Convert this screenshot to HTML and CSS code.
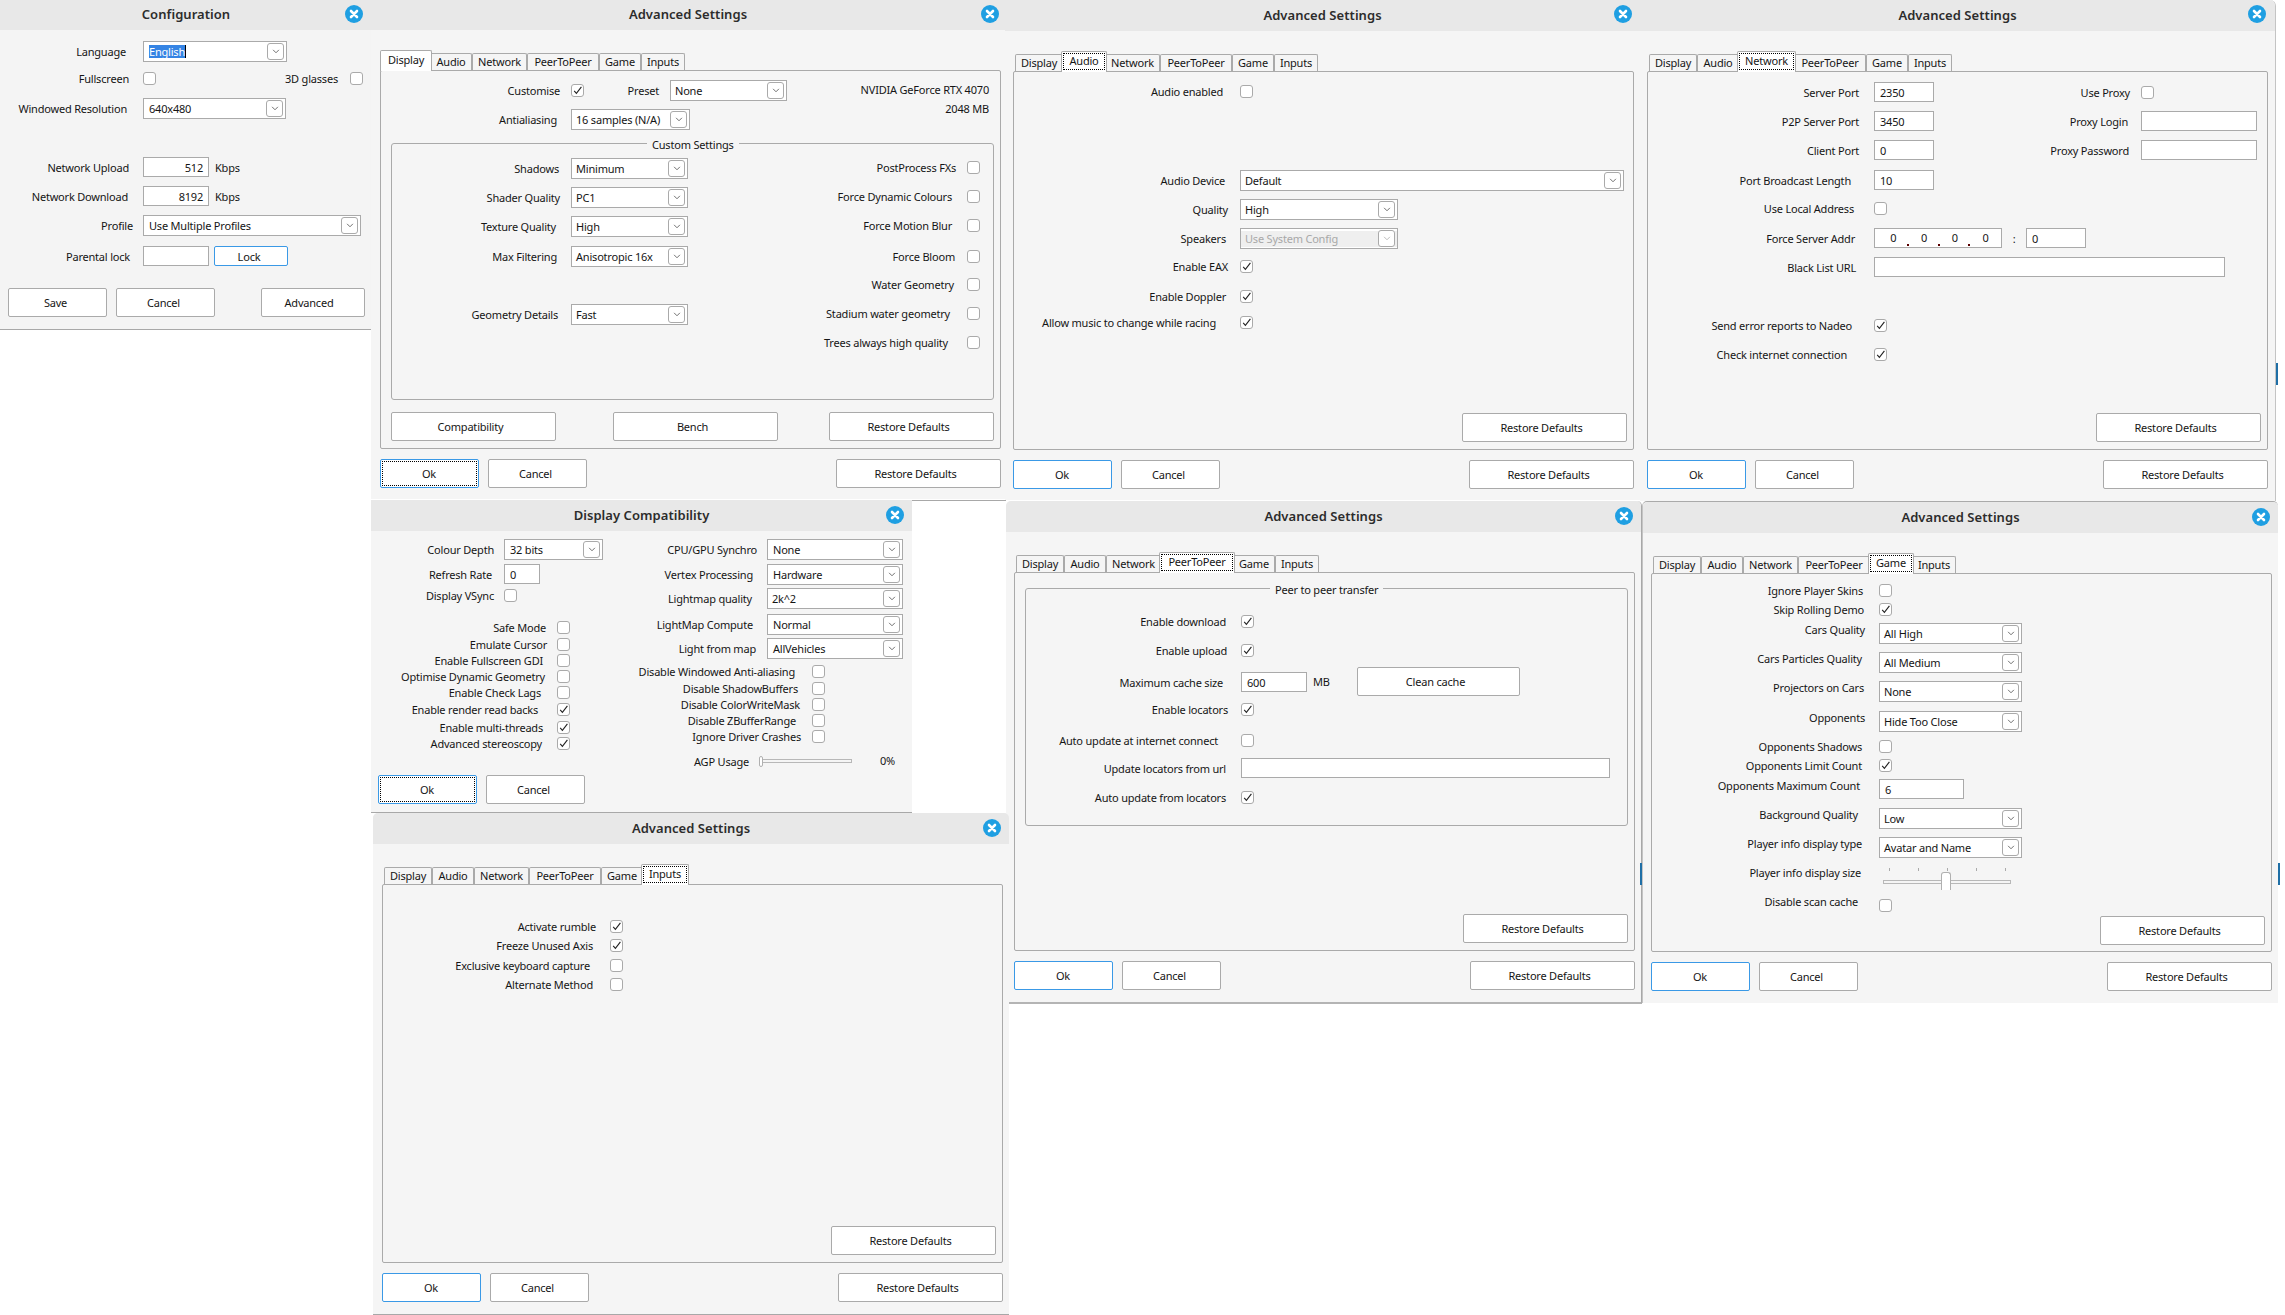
FILE: index.html
```html
<!DOCTYPE html>
<html lang="en">
<head>
<meta charset="utf-8">
<title>Game configuration dialogs</title>
<link rel="stylesheet" href="styles.css">
</head>
<body>
<svg class="defs" width="0" height="0" aria-hidden="true">
  <symbol id="chev" viewBox="0 0 9 6"><path d="M1 1 L4.5 4.5 L8 1" fill="none" stroke="currentColor" stroke-width="1"/></symbol>
  <symbol id="tick" viewBox="0 0 11 11"><path d="M2.2 5.8 L4.4 8.4 L9.4 1.8" fill="none" stroke="#222" stroke-width="1.1"/></symbol>
  <symbol id="close" viewBox="0 0 18 18"><circle cx="9" cy="9" r="9" fill="#1f9fe2"/><path d="M6 6 L12 12 M12 6 L6 12" stroke="#fff" stroke-width="2.6" stroke-linecap="round"/></symbol>
</svg>
<main class="desktop">

<section class="win w-config">
  <header class="title"><h2>Configuration</h2><svg class="x"><use href="#close"/></svg></header>
  <div class="form f-config">
    <div class="row"><span class="lb p17">Language</span><div class="combo w144 pl5"><span><span class="sel">English</span></span><i class="drop"><svg><use href="#chev"/></svg></i></div></div>
    <div class="row"><span class="lb p14">Fullscreen</span><i class="cb"></i><span class="lb glasses">3D glasses</span><i class="cb"></i></div>
    <div class="row"><span class="lb p16">Windowed Resolution</span><div class="combo w143 pl5"><span>640x480</span><i class="drop"><svg><use href="#chev"/></svg></i></div></div>
    <div class="row"><span class="lb p14">Network Upload</span><div class="field w66 end">512</div><span class="unit">Kbps</span></div>
    <div class="row"><span class="lb p15">Network Download</span><div class="field w66 end">8192</div><span class="unit">Kbps</span></div>
    <div class="row"><span class="lb p10">Profile</span><div class="combo w218 pl5"><span>Use Multiple Profiles</span><i class="drop"><svg><use href="#chev"/></svg></i></div></div>
    <div class="row"><span class="lb p13">Parental lock</span><div class="field w66"></div><button class="btn lock">Lock</button></div>
  </div>
  <footer class="actions config-actions">
    <button class="btn">Save</button><button class="btn ml9">Cancel</button><button class="btn wide push">Advanced</button>
  </footer>
</section>

<section class="win adv w-display short">
  <header class="title"><h2>Advanced Settings</h2><svg class="x"><use href="#close"/></svg></header>
  <div class="adv-body">
    <nav class="tabs"><span class="tab t-display on">Display</span><span class="tab t-audio">Audio</span><span class="tab t-network">Network</span><span class="tab t-peer">PeerToPeer</span><span class="tab t-game">Game</span><span class="tab t-inputs">Inputs</span></nav>
    <div class="pane">
      <div class="overlay">
        <div class="form f-disp-top">
          <div class="row"><span class="lb p11">Customise</span><i class="cb on"><svg><use href="#tick"/></svg></i><span class="lb preset p11">Preset</span><div class="combo w117"><span>None</span><i class="drop"><svg><use href="#chev"/></svg></i></div></div>
          <div class="row"><span class="lb p14">Antialiasing</span><div class="combo w119"><span>16 samples (N/A)</span><i class="drop"><svg><use href="#chev"/></svg></i></div></div>
        </div>
        <div class="gpu"><p>NVIDIA GeForce RTX 4070</p><p>2048 MB</p></div>
      </div>
      <div class="group g-custom">
        <span class="legend lg-custom">Custom Settings</span>
        <div class="form f-disp-left">
          <div class="row"><span class="lb p12">Shadows</span><div class="combo w117"><span>Minimum</span><i class="drop"><svg><use href="#chev"/></svg></i></div></div>
          <div class="row"><span class="lb p11">Shader Quality</span><div class="combo w117"><span>PC1</span><i class="drop"><svg><use href="#chev"/></svg></i></div></div>
          <div class="row"><span class="lb p15">Texture Quality</span><div class="combo w117"><span>High</span><i class="drop"><svg><use href="#chev"/></svg></i></div></div>
          <div class="row"><span class="lb p14">Max Filtering</span><div class="combo w117"><span>Anisotropic 16x</span><i class="drop"><svg><use href="#chev"/></svg></i></div></div>
          <div class="row"><span class="lb p13">Geometry Details</span><div class="combo w117"><span>Fast</span><i class="drop"><svg><use href="#chev"/></svg></i></div></div>
        </div>
        <div class="form f-disp-right">
          <div class="row"><span class="lb p11">PostProcess FXs</span><i class="cb"></i></div>
          <div class="row"><span class="lb p15">Force Dynamic Colours</span><i class="cb"></i></div>
          <div class="row"><span class="lb p15">Force Motion Blur</span><i class="cb"></i></div>
          <div class="row"><span class="lb p12">Force Bloom</span><i class="cb"></i></div>
          <div class="row"><span class="lb p13">Water Geometry</span><i class="cb"></i></div>
          <div class="row"><span class="lb p17">Stadium water geometry</span><i class="cb"></i></div>
          <div class="row"><span class="lb p19">Trees always high quality</span><i class="cb"></i></div>
        </div>
      </div>
      <div class="pane-foot disp-foot"><button class="btn w165">Compatibility</button><button class="btn w165 ml57">Bench</button><button class="btn w165 push">Restore Defaults</button></div>
    </div>
    <footer class="actions"><button class="btn ok dotted">Ok</button><button class="btn ml9">Cancel</button><button class="btn w165 push">Restore Defaults</button></footer>
  </div>
</section>

<section class="win adv w-audio">
  <header class="title"><h2>Advanced Settings</h2><svg class="x"><use href="#close"/></svg></header>
  <div class="adv-body">
    <nav class="tabs"><span class="tab t-display">Display</span><span class="tab t-audio on dotted">Audio</span><span class="tab t-network">Network</span><span class="tab t-peer">PeerToPeer</span><span class="tab t-game">Game</span><span class="tab t-inputs">Inputs</span></nav>
    <div class="pane">
      <div class="form f-audio">
        <div class="row"><span class="lb p17">Audio enabled</span><i class="cb"></i></div>
        <div class="row"><span class="lb p15">Audio Device</span><div class="combo w384"><span>Default</span><i class="drop"><svg><use href="#chev"/></svg></i></div></div>
        <div class="row"><span class="lb p12">Quality</span><div class="combo w158"><span>High</span><i class="drop"><svg><use href="#chev"/></svg></i></div></div>
        <div class="row"><span class="lb p14">Speakers</span><div class="combo w158 off"><span>Use System Config</span><i class="drop"><svg><use href="#chev"/></svg></i></div></div>
        <div class="row"><span class="lb p12">Enable EAX</span><i class="cb on"><svg><use href="#tick"/></svg></i></div>
        <div class="row"><span class="lb p14">Enable Doppler</span><i class="cb on"><svg><use href="#tick"/></svg></i></div>
        <div class="row"><span class="lb p24">Allow music to change while racing</span><i class="cb on"><svg><use href="#tick"/></svg></i></div>
      </div>
      <div class="pane-foot"><button class="btn w165">Restore Defaults</button></div>
    </div>
    <footer class="actions"><button class="btn ok">Ok</button><button class="btn ml9">Cancel</button><button class="btn w165 push">Restore Defaults</button></footer>
  </div>
</section>

<section class="win adv w-network">
  <header class="title"><h2>Advanced Settings</h2><svg class="x"><use href="#close"/></svg></header>
  <div class="adv-body">
    <nav class="tabs"><span class="tab t-display">Display</span><span class="tab t-audio">Audio</span><span class="tab t-network on dotted">Network</span><span class="tab t-peer">PeerToPeer</span><span class="tab t-game">Game</span><span class="tab t-inputs">Inputs</span></nav>
    <div class="pane">
      <div class="overlay">
        <div class="form f-net-left">
          <div class="row"><span class="lb p15">Server Port</span><div class="field w60">2350</div></div>
          <div class="row"><span class="lb p15">P2P Server Port</span><div class="field w60">3450</div></div>
          <div class="row"><span class="lb p15">Client Port</span><div class="field w60">0</div></div>
          <div class="row"><span class="lb p23">Port Broadcast Length</span><div class="field w60">10</div></div>
          <div class="row"><span class="lb p20">Use Local Address</span><i class="cb"></i></div>
          <div class="row"><span class="lb p19">Force Server Addr</span><div class="field ip"><span class="seg">0</span><span class="seg">0</span><span class="seg">0</span><span class="seg">0</span></div><span class="colon">:</span><div class="field w60">0</div></div>
          <div class="row"><span class="lb p18">Black List URL</span><div class="field w351"></div></div>
          <div class="row"><span class="lb p22">Send error reports to Nadeo</span><i class="cb on"><svg><use href="#tick"/></svg></i></div>
          <div class="row"><span class="lb p27">Check internet connection</span><i class="cb on"><svg><use href="#tick"/></svg></i></div>
        </div>
        <div class="form f-net-right">
          <div class="row"><span class="lb p11">Use Proxy</span><i class="cb"></i></div>
          <div class="row"><span class="lb p13">Proxy Login</span><div class="field w116"></div></div>
          <div class="row"><span class="lb p12">Proxy Password</span><div class="field w116"></div></div>
        </div>
      </div>
      <div class="pane-foot"><button class="btn w165">Restore Defaults</button></div>
    </div>
    <footer class="actions"><button class="btn ok">Ok</button><button class="btn ml9">Cancel</button><button class="btn w165 push">Restore Defaults</button></footer>
  </div>
</section>

<div class="win blank"></div>

<section class="win w-compat">
  <header class="title"><h2>Display Compatibility</h2><svg class="x"><use href="#close"/></svg></header>
  <div class="overlay">
    <div class="compat-left">
      <div class="form f-comp-a">
        <div class="row"><span class="lb p10">Colour Depth</span><div class="combo w99 pl5"><span>32 bits</span><i class="drop"><svg><use href="#chev"/></svg></i></div></div>
        <div class="row"><span class="lb p12">Refresh Rate</span><div class="field w36">0</div></div>
        <div class="row"><span class="lb p10">Display VSync</span><i class="cb"></i></div>
      </div>
      <div class="form f-comp-b">
        <div class="row"><span class="lb p11">Safe Mode</span><i class="cb"></i></div>
        <div class="row"><span class="lb p10">Emulate Cursor</span><i class="cb"></i></div>
        <div class="row"><span class="lb p14">Enable Fullscreen GDI</span><i class="cb"></i></div>
        <div class="row"><span class="lb p12">Optimise Dynamic Geometry</span><i class="cb"></i></div>
        <div class="row"><span class="lb p16">Enable Check Lags</span><i class="cb"></i></div>
        <div class="row"><span class="lb p19">Enable render read backs</span><i class="cb on"><svg><use href="#tick"/></svg></i></div>
        <div class="row"><span class="lb p14">Enable multi-threads</span><i class="cb on"><svg><use href="#tick"/></svg></i></div>
        <div class="row"><span class="lb p15">Advanced stereoscopy</span><i class="cb on"><svg><use href="#tick"/></svg></i></div>
      </div>
      <footer class="actions comp-actions"><button class="btn ok dotted">Ok</button><button class="btn ml9">Cancel</button></footer>
    </div>
    <div class="compat-right">
      <div class="form f-comp-c">
        <div class="row"><span class="lb p10">CPU/GPU Synchro</span><div class="combo w136 pl5"><span>None</span><i class="drop"><svg><use href="#chev"/></svg></i></div></div>
        <div class="row"><span class="lb p14">Vertex Processing</span><div class="combo w136 pl5"><span>Hardware</span><i class="drop"><svg><use href="#chev"/></svg></i></div></div>
        <div class="row"><span class="lb p15">Lightmap quality</span><div class="combo w136"><span>2k^2</span><i class="drop"><svg><use href="#chev"/></svg></i></div></div>
        <div class="row"><span class="lb p14">LightMap Compute</span><div class="combo w136 pl5"><span>Normal</span><i class="drop"><svg><use href="#chev"/></svg></i></div></div>
        <div class="row"><span class="lb p11">Light from map</span><div class="combo w136 pl5"><span>AllVehicles</span><i class="drop"><svg><use href="#chev"/></svg></i></div></div>
      </div>
      <div class="form f-comp-d">
        <div class="row"><span class="lb p17">Disable Windowed Anti-aliasing</span><i class="cb"></i></div>
        <div class="row"><span class="lb p14">Disable ShadowBuffers</span><i class="cb"></i></div>
        <div class="row"><span class="lb p12">Disable ColorWriteMask</span><i class="cb"></i></div>
        <div class="row"><span class="lb p16">Disable ZBufferRange</span><i class="cb"></i></div>
        <div class="row"><span class="lb p11">Ignore Driver Crashes</span><i class="cb"></i></div>
      </div>
      <div class="form f-comp-e">
        <div class="row"><span class="lb p10">AGP Usage</span><div class="slider agp"><span class="track"></span><span class="thumb"></span></div><span class="pct">0%</span></div>
      </div>
    </div>
  </div>
</section>

<section class="win adv w-peer">
  <header class="title"><h2>Advanced Settings</h2><svg class="x"><use href="#close"/></svg></header>
  <div class="adv-body">
    <nav class="tabs"><span class="tab t-display">Display</span><span class="tab t-audio">Audio</span><span class="tab t-network">Network</span><span class="tab t-peer on dotted">PeerToPeer</span><span class="tab t-game">Game</span><span class="tab t-inputs">Inputs</span></nav>
    <div class="pane">
      <div class="group g-peer">
        <span class="legend lg-peer">Peer to peer transfer</span>
        <div class="form f-peer">
          <div class="row"><span class="lb p15">Enable download</span><i class="cb on"><svg><use href="#tick"/></svg></i></div>
          <div class="row"><span class="lb p14">Enable upload</span><i class="cb on"><svg><use href="#tick"/></svg></i></div>
          <div class="row"><span class="lb p18">Maximum cache size</span><div class="field w66">600</div><span class="mb">MB</span><button class="btn clean">Clean cache</button></div>
          <div class="row"><span class="lb p13">Enable locators</span><i class="cb on"><svg><use href="#tick"/></svg></i></div>
          <div class="row"><span class="lb p23">Auto update at internet connect</span><i class="cb"></i></div>
          <div class="row"><span class="lb p15">Update locators from url</span><div class="field w369"></div></div>
          <div class="row"><span class="lb p15">Auto update from locators</span><i class="cb on"><svg><use href="#tick"/></svg></i></div>
        </div>
      </div>
      <div class="pane-foot"><button class="btn w165">Restore Defaults</button></div>
    </div>
    <footer class="actions"><button class="btn ok">Ok</button><button class="btn ml9">Cancel</button><button class="btn w165 push">Restore Defaults</button></footer>
  </div>
</section>

<section class="win adv w-game">
  <header class="title"><h2>Advanced Settings</h2><svg class="x"><use href="#close"/></svg></header>
  <div class="adv-body">
    <nav class="tabs"><span class="tab t-display">Display</span><span class="tab t-audio">Audio</span><span class="tab t-network">Network</span><span class="tab t-peer">PeerToPeer</span><span class="tab t-game on dotted">Game</span><span class="tab t-inputs">Inputs</span></nav>
    <div class="pane">
      <div class="form f-game">
        <div class="row"><span class="lb p16">Ignore Player Skins</span><i class="cb"></i></div>
        <div class="row"><span class="lb p15">Skip Rolling Demo</span><i class="cb on"><svg><use href="#tick"/></svg></i></div>
        <div class="row"><span class="lb p14 up">Cars Quality</span><div class="combo w143"><span>All High</span><i class="drop"><svg><use href="#chev"/></svg></i></div></div>
        <div class="row"><span class="lb p17 up">Cars Particles Quality</span><div class="combo w143"><span>All Medium</span><i class="drop"><svg><use href="#chev"/></svg></i></div></div>
        <div class="row"><span class="lb p15 up">Projectors on Cars</span><div class="combo w143"><span>None</span><i class="drop"><svg><use href="#chev"/></svg></i></div></div>
        <div class="row"><span class="lb p14 up">Opponents</span><div class="combo w143"><span>Hide Too Close</span><i class="drop"><svg><use href="#chev"/></svg></i></div></div>
        <div class="row"><span class="lb p17">Opponents Shadows</span><i class="cb"></i></div>
        <div class="row"><span class="lb p17">Opponents Limit Count</span><i class="cb on"><svg><use href="#tick"/></svg></i></div>
        <div class="row"><span class="lb p19 up">Opponents Maximum Count</span><div class="field w85">6</div></div>
        <div class="row"><span class="lb p21 up">Background Quality</span><div class="combo w143"><span>Low</span><i class="drop"><svg><use href="#chev"/></svg></i></div></div>
        <div class="row"><span class="lb p17 up">Player info display type</span><div class="combo w143"><span>Avatar and Name</span><i class="drop"><svg><use href="#chev"/></svg></i></div></div>
        <div class="row"><span class="lb p18 up">Player info display size</span>
          <div class="slider size"><span class="tk k1"></span><span class="tk k2"></span><span class="tk k3"></span><span class="tk k4"></span><span class="tk k5"></span><span class="track"></span><span class="thumb"></span></div>
        </div>
        <div class="row"><span class="lb p21 up">Disable scan cache</span><i class="cb"></i></div>
      </div>
      <div class="pane-foot"><button class="btn w165">Restore Defaults</button></div>
    </div>
    <footer class="actions"><button class="btn ok">Ok</button><button class="btn ml9">Cancel</button><button class="btn w165 push">Restore Defaults</button></footer>
  </div>
</section>

<section class="win adv w-inputs">
  <header class="title"><h2>Advanced Settings</h2><svg class="x"><use href="#close"/></svg></header>
  <div class="adv-body">
    <nav class="tabs"><span class="tab t-display">Display</span><span class="tab t-audio">Audio</span><span class="tab t-network">Network</span><span class="tab t-peer">PeerToPeer</span><span class="tab t-game">Game</span><span class="tab t-inputs on dotted">Inputs</span></nav>
    <div class="pane">
      <div class="form f-inputs">
        <div class="row"><span class="lb p14">Activate rumble</span><i class="cb on"><svg><use href="#tick"/></svg></i></div>
        <div class="row"><span class="lb p17">Freeze Unused Axis</span><i class="cb on"><svg><use href="#tick"/></svg></i></div>
        <div class="row"><span class="lb p20">Exclusive keyboard capture</span><i class="cb"></i></div>
        <div class="row"><span class="lb p17">Alternate Method</span><i class="cb"></i></div>
      </div>
      <div class="pane-foot"><button class="btn w165">Restore Defaults</button></div>
    </div>
    <footer class="actions"><button class="btn ok">Ok</button><button class="btn ml9">Cancel</button><button class="btn w165 push">Restore Defaults</button></footer>
  </div>
</section>

<span class="strip s1"></span><span class="strip s2"></span><span class="strip s3"></span>
</main>
</body>
</html>
```
FILE: styles.css
```css
*{box-sizing:border-box}
html,body{margin:0;padding:0;background:#fff}
body{font:11px/1 "Noto Sans","Liberation Sans",sans-serif;letter-spacing:-.2px;color:#151515}
.defs{position:absolute}
.desktop{position:relative;width:2285px;height:1315px;overflow:hidden}

/* windows placed on the desktop */
.win{position:absolute;background:#f5f5f5}
.w-config{left:0;top:0;width:372px;height:330px;background:#f4f4f4;border-bottom:1px solid #a8a8a8}
.w-display{left:371px;top:0;width:634px;height:499px;--mx:9px}
.w-audio{left:1005px;top:0;width:635px;height:500px;--mx:8px}
.w-network{left:1640px;top:0;width:636px;height:501px;--mx:7px;border-right:1px solid #c4c4c4;border-top-right-radius:6px}
.blank{left:912px;top:500px;width:94px;height:313px;background:#fff;border-top:1px solid #a8a8a8}
.w-compat{left:371px;top:500px;width:541px;height:313px;background:#f5f5f5;border-bottom:1px solid #a8a8a8}
.w-peer{left:1006px;top:501px;width:636px;height:503px;--mx:8px;border-right:1px solid #a8a8a8;border-bottom:2px solid #b4b4b4;border-radius:5px 5px 0 0}
.w-game{left:1642px;top:501px;width:636px;height:502px;--mx:9px;border-left:1px solid #c4c4c4;border-top:1px solid #aaa;border-radius:5px 5px 0 0}
.w-game .adv-body{margin-left:8px}
.w-inputs{left:373px;top:813px;width:636px;height:502px;--mx:9px;border-bottom:1px solid #a8a8a8;border-radius:5px 5px 0 0}
.strip{position:absolute;width:2px;height:22px;background:#1f6fa6}
.s1{left:2276px;top:363px}
.s2{left:1640px;top:863px;z-index:2}
.s3{left:2278px;top:863px}

.title{position:relative;height:31px;background:#e8e8e8;display:flex;align-items:center;justify-content:center;padding-bottom:1px;border-radius:inherit}
.w-config .title,.short .title{height:30px}
.title h2{margin:0;font:600 13px/1 "Noto Sans",sans-serif;color:#2c2c2c;letter-spacing:.05px}
.x{position:absolute;right:9px;top:5px;width:18px;height:18px}
.w-config .x{right:9px}
.w-display .x{right:6px}
.w-audio .x{right:8px}
.w-network .x{right:9px}
.w-compat .x{right:8px;top:6px}
.w-peer .x{right:8px;top:6px}
.w-game .x{right:8px;top:6px}
.w-inputs .x{right:8px;top:6px}

/* tabs */
.adv-body{width:621px;margin-left:var(--mx)}
.tabs{position:relative;z-index:1;display:flex;height:21px;margin-top:20px;padding-left:2px}
.tab{--w:48px;width:var(--w);height:17px;margin-top:3px;border:1px solid #aaa;border-bottom:0;border-radius:2px 2px 0 0;display:flex;align-items:center;justify-content:center;background:#f5f5f5;padding-bottom:2px}
.tab.on{width:calc(var(--w) + 4px);height:21px;margin:0 -2px;background:#fff;position:relative;z-index:1;padding-bottom:3px}
.tab.dotted{outline:1px dotted #000;outline-offset:-3px}
.t-display{--w:48px}
.t-audio{--w:42px}
.t-network{--w:55px}
.t-peer{--w:72px}
.t-game{--w:42px}
.t-inputs{--w:44px}
.pane{position:relative;height:379px;margin-top:-1px;border:1px solid #aaa;border-radius:2px;display:flex;flex-direction:column}
.pane-foot{margin-top:auto;padding:0 6px 7px;display:flex;justify-content:flex-end}
.disp-foot{padding-left:10px;justify-content:flex-start}

/* forms: track sizes are the pitch between rows */
.form{display:grid;--lw:100px}
.row{display:flex;align-items:center;height:21px}
.lb{flex:none;width:var(--lw);text-align:right;white-space:nowrap}
.lb.up{margin-top:-8px}
.overlay{display:grid}
.overlay>*{grid-area:1/1}

.f-config{--lw:143px;margin-top:11px;grid-template-rows:27px 30px 59px 29px 29px 31px 21px}
.f-disp-top{--lw:190px;margin-top:9px;grid-template-rows:29px 21px}
.gpu{justify-self:end;margin-top:9px;padding-right:11px;text-align:right;line-height:19px}
.gpu p{margin:0}
.group{position:relative;width:603px;margin-left:10px;border:1px solid #aaa;border-radius:3px}
.g-custom{height:257px;margin-top:13px;display:flex;justify-content:space-between}
.g-peer{height:238px;margin-top:15px}
.legend{position:absolute;top:-6px;background:#f5f5f5;padding:0 5px;line-height:14px}
.lg-custom{left:255px}
.lg-peer{left:244px}
.f-disp-left{--lw:179px;margin-top:14px;grid-template-rows:29px 29px 30px 58px 21px;align-self:start}
.f-disp-right{--lw:200px;margin-top:13px;padding-right:13px;grid-template-rows:29px 29px 31px 28px 29px 29px 21px;align-self:start}
.f-audio{--lw:226px;margin-top:9px;grid-template-rows:89px 29px 29px 28px 30px 26px 21px}
.f-net-left{--lw:226px;margin-top:10px;grid-template-rows:29px 29px 30px 28px 30px 29px 58px 29px 21px}
.f-net-right{--lw:180px;margin-top:10px;padding-right:10px;justify-self:end;align-self:start;grid-template-rows:29px 29px 21px}
.compat-left{padding:0}
.f-comp-a{--lw:133px;margin-top:8px;grid-template-rows:25px 21px 21px}
.f-comp-b{--lw:186px;margin-top:11px;grid-template-rows:17px 16px 16px 16px 17px 18px 16px 21px}
.compat-right{margin-left:259px}
.f-comp-c{--lw:137px;margin-top:8px;grid-template-rows:25px 24px 26px 24px 21px}
.f-comp-d{--lw:182px;margin-top:2px;grid-template-rows:17px 16px 16px 16px 21px}
.f-comp-e{--lw:129px;margin-top:4px}
.f-peer{--lw:215px;margin-top:22px;grid-template-rows:29px 32px 27px 31px 28px 29px 21px}
.f-game{--lw:227px;margin-top:6px;grid-template-rows:19px 24px 29px 29px 30px 25px 19px 24px 29px 29px 29px 29px 21px}
.f-inputs{--lw:227px;margin-top:31px;grid-template-rows:19px 20px 19px 21px}

.p10{padding-right:10px}.p11{padding-right:11px}.p12{padding-right:12px}.p13{padding-right:13px}
.p14{padding-right:14px}.p15{padding-right:15px}.p16{padding-right:16px}.p17{padding-right:17px}
.p18{padding-right:18px}.p19{padding-right:19px}.p20{padding-right:20px}.p21{padding-right:21px}
.p22{padding-right:22px}.p23{padding-right:23px}.p24{padding-right:24px}.p27{padding-right:27px}

.lb.preset{width:86px}
.lb.glasses{width:194px;padding-right:12px}

/* controls */
.cb{flex:none;display:block;width:13px;height:13px;background:#fff;border:1px solid #aaa;border-radius:3px}
.cb svg{display:block;width:11px;height:11px}
.combo{flex:none;display:flex;align-items:center;height:21px;background:#fff;border:1px solid #aaa;padding:0 2px 0 4px;justify-content:space-between}
.combo.pl5{padding-left:5px}
.sel{background:#3584e4;color:#fff;border-right:1px solid #000;display:inline-block;line-height:13px;padding:0 0 0 0}
.drop{flex:none;width:17px;height:17px;background:#fff;border:1px solid #aaa;border-radius:3px;display:flex;align-items:center;justify-content:center;color:#555}
.drop svg{display:block;width:8px;height:5px}
.combo.off{color:#a8a8a8;background:linear-gradient(#fff 2px,#efefef 2px,#efefef 18px,#fff 18px)}
.combo.off .drop{color:#b0b0b0}
.field{flex:none;height:20px;align-self:flex-start;background:#fff;border:1px solid #aaa;padding:0 5px;display:flex;align-items:center;white-space:nowrap}
.end{justify-content:flex-end}
.unit{margin-left:6px}
.mb{width:50px;padding-left:6px;flex:none;margin-top:-3px}
.ip{width:128px;padding:0 0 0 3px}
.seg{position:relative;width:32px;text-align:center;line-height:14px}
.seg:not(:last-child)::after{content:"";position:absolute;right:0;bottom:-1px;width:2px;height:2px;background:#5a0000}
.colon{width:24px;text-align:center;flex:none}

.w36{width:36px}.w60{width:60px}.w66{width:66px}.w85{width:85px}.w99{width:99px}.w116{width:116px}
.w117{width:117px}.w119{width:119px}.w136{width:136px}.w143{width:143px}.w144{width:144px}.w158{width:158px}
.w218{width:218px}.w351{width:351px}.w369{width:369px}.w384{width:384px}

.btn{flex:none;display:block;width:99px;height:29px;padding:0 4px 0 0;background:#fff;border:1px solid #aaa;border-radius:2px;font:inherit;letter-spacing:inherit;color:inherit}
.btn.wide{width:104px;padding-right:8px}
.btn.w165{width:165px;padding-right:6px}
.btn.ok{border-color:#3a99e6;padding-right:1px}
.btn.dotted{outline:1px dotted #000;outline-offset:-3px}
.btn.lock{width:74px;height:20px;margin-left:5px;align-self:flex-start;border-color:#3a99e6}
.btn.clean{width:163px;height:29px;margin-top:-2px;padding-right:6px}
.ml9{margin-left:9px}
.ml57{margin-left:57px}
.push{margin-left:auto}
.actions{display:flex;margin-top:10px}
.config-actions{margin-top:21px;padding:0 7px 0 8px}
.comp-actions{margin-top:21px;padding-left:7px;width:300px}

/* sliders */
.slider{position:relative;flex:none}
.track{position:absolute;background:#f5f5f5;border:1px solid #b8b8b8}
.thumb{position:absolute;background:#fff;border:1px solid #b0b0b0;border-radius:2px}
.agp{width:93px;height:21px}
.agp .track{left:0;right:0;top:8px;height:4px}
.agp .thumb{left:0;top:5px;width:4px;height:11px}
.pct{margin-left:28px;margin-top:-3px}
.size{width:128px;height:24px;margin-left:4px;align-self:flex-start}
.size .track{left:0;right:0;top:14px;height:4px}
.size .thumb{left:58px;top:6px;width:10px;height:18px;border-bottom:0;border-radius:3px 3px 0 0}
.tk{position:absolute;top:2px;width:1px;height:3px;background:#aaa}
.k1{left:6px}.k2{left:35px}.k3{left:64px}.k4{left:93px}.k5{left:122px}
```
